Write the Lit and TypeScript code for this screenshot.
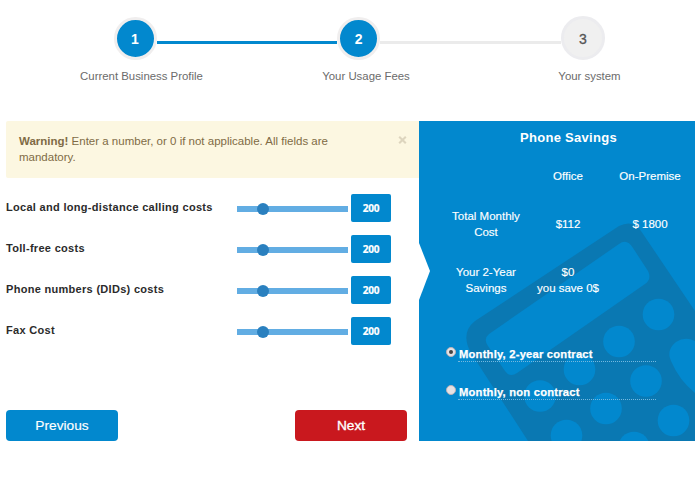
import { LitElement, html, css, svg } from "lit";
import { customElement } from "lit/decorators.js";
import { classMap } from "lit/directives/class-map.js";

const FEES = [
  { label: "Local and long-distance calling costs", value: 200 },
  { label: "Toll-free costs", value: 200 },
  { label: "Phone numbers (DIDs) costs", value: 200 },
  { label: "Fax Cost", value: 200 },
];

const KEYS = [
  [239.5, 193.5], [200, 220.5], [160.5, 248.5], [121, 275],
  [227, 260], [187, 287.5], [147.5, 314.5], [254.5, 299.5], [215, 326.5],
];

@customElement("wizard-steps")
class WizardSteps extends LitElement {
  static styles = css`
    :host { display: block; height: 120px; }
    .track { display: flex; align-items: center; padding: 16px 95px 0 113.5px; height: 44px; }
    .dot {
      box-sizing: border-box; flex: none; width: 43px; height: 43px; border-radius: 50%;
      border: 3px solid #f0eeee; background: #0288ce; color: #fff;
      font: bold 14px/37px "Liberation Sans", Arial, sans-serif; text-align: center; padding-top: 1px;
    }
    .dot.todo { width: 44px; height: 44px; background: #f0f0f0; border-color: #ececef; color: #555; font-weight: normal; -webkit-text-stroke: 0.3px #555; line-height: 38px; }
    .line { flex: 1; height: 3px; margin-top: 8px; background: #ebebeb; }
    .line.done { background: #0288ce; }
    .names { display: grid; grid-template-columns: 283px 166px 1fr; height: 20px; margin-top: 6px; }
    .name { text-align: center; font-size: 11.4px; line-height: 20px; color: #6b6b6b; white-space: nowrap; }
    .n3 { padding-right: 30px; padding-left: 60px; }
  `;
  render() {
    return html`
      <div class="track">
        <div class="dot">1</div><div class="line done"></div>
        <div class="dot">2</div><div class="line"></div>
        <div class="dot todo">3</div>
      </div>
      <div class="names">
        <div class="name">Current Business Profile</div>
        <div class="name">Your Usage Fees</div>
        <div class="name n3">Your system</div>
      </div>`;
  }
}

@customElement("fee-row")
class FeeRow extends LitElement {
  static properties = { label: {}, value: { type: Number } };
  declare label: string;
  declare value: number;
  static styles = css`
    :host { display: grid; grid-template-columns: 230.5px 111.5px 40px; align-items: center; height: 28px; }
    .label { font-size: 11px; font-weight: bold; letter-spacing: 0.3px; color: #2b2b2b; white-space: nowrap; line-height: 16px; padding-bottom: 2px; }
    .slider { display: flex; align-items: center; height: 6px; margin-top: 2px; background: #62ade3; }
    .knob { width: 12px; height: 12px; border-radius: 50%; background: #2a80bf; margin-left: 20px; }
    .value { margin-left: 3px; width: 40px; height: 28px; border-radius: 2px; background: #0288ce; color: #fff; text-align: center; font: bold 10px/28px "Open Sans", sans-serif; letter-spacing: -0.2px; -webkit-text-stroke: 0.2px #fff; }
  `;
  render() {
    return html`
      <div class="label">${this.label}</div>
      <div class="slider"><div class="knob"></div></div>
      <div class="value">${this.value}</div>`;
  }
}

@customElement("savings-panel")
class SavingsPanel extends LitElement {
  static styles = css`
    :host { display: block; position: relative; width: 276px; height: 320px; background: #0288ce; color: #fff; overflow: hidden; }
    .art { position: absolute; inset: 0; width: 276px; height: 320px; }
    .body { position: relative; }
    .title { padding: 7px 0 0 23px; text-align: center; font-size: 13px; font-weight: bold; line-height: 20px; letter-spacing: 0.28px; }
    .grid { display: grid; grid-template-columns: 98px 64px 82px; column-gap: 3px 9px; column-gap: 3px; padding-left: 16px; margin-top: 20px; font-size: 11.5px; line-height: 16px; text-align: center; align-items: center; grid-template-rows: 16px 32px 32px; row-gap: 24px; white-space: nowrap; -webkit-text-stroke: 0.15px #fff; }
    .grid :nth-child(3n + 1) { padding-left: 4px; }
    .grid :nth-child(3n) { padding-left: 12px; }
    .options { margin: 50px 0 0 27px; display: grid; row-gap: 22px; }
    .option { display: flex; align-items: flex-start; height: 16px; }
    .radio { box-sizing: border-box; width: 10px; height: 10px; margin-top: 1px; border-radius: 50%; border: 1px solid #bbb2b7; background: #e5e2e4; display: grid; place-items: center; }
    .radio.on::after { content: ""; width: 4px; height: 4px; border-radius: 50%; background: #444; }
    .text { margin-left: 2px; padding-left: 1px; width: 197px; height: 15px; font-size: 11.2px; letter-spacing: 0.22px; font-weight: bold; line-height: 16px; border-bottom: 1px dotted #74b8df; -webkit-text-stroke: 0.25px #fff; }
  `;
  option(text: string, on: boolean) {
    return html`<div class="option"><span class=${classMap({ radio: true, on })}></span><span class="text">${text}</span></div>`;
  }
  render() {
    return html`
      <svg class="art" viewBox="0 0 276 320">
        <path fill="#0a78b2" d="M200 105Q214 98 222 110L276 190V320H109L52 232Q41 212 56 200Z" />
        <path fill="#0288ce" d="M70 213Q64 218 69 225L86 250Q91 257 98 252L226 163Q233 158 229 150L214 127Q208 117 200 123Z" />
        <path fill="#0288ce" d="M276 220Q266 215 257 221Q247 229 252 240Q260 259 276 272Z" />
        ${KEYS.map(([x, y]) => svg`<circle cx=${x} cy=${y} r="15.8" fill="#0288ce" />`)}
        <path fill="#fff" d="M0 122L11 150L0 179Z" />
      </svg>
      <div class="body">
        <div class="title">Phone Savings</div>
        <div class="grid">
          <div></div><div>Office</div><div>On-Premise</div>
          <div>Total Monthly<br />Cost</div><div>$112</div><div>$ 1800</div>
          <div>Your 2-Year<br />Savings</div><div>$0<br />you save 0$</div><div></div>
        </div>
        <div class="options">
          ${this.option("Monthly, 2-year contract", true)}
          ${this.option("Monthly, non contract", false)}
        </div>
      </div>`;
  }
}

@customElement("app-root")
class AppRoot extends LitElement {
  static styles = css`
    :host { display: block; width: 700px; height: 480px; overflow: hidden; background: #fff; font-family: "Liberation Sans", Arial, sans-serif; }
    .main { display: flex; padding-left: 6px; margin-top: 1px; }
    .left { width: 413px; height: 320px; display: flex; flex-direction: column; }
    .warning { box-sizing: border-box; height: 57px; padding: 12px 9px 0 13px; display: flex; justify-content: space-between; background: #fcf7e1; border-radius: 2px 0 0 2px; color: #806b45; font-size: 11.5px; line-height: 16px; }
    .message { width: 330px; }
    .close { width: 9px; height: 8px; margin: 3px 3px 0 0; }
    .fees { display: grid; row-gap: 13px; margin-top: 16px; }
    .buttons { display: flex; justify-content: space-between; width: 401px; margin-top: auto; }
    .button { width: 112px; height: 31px; border: 0; padding: 0; border-radius: 4px; background: #0288ce; color: #fff; font: 13.7px/31px "Liberation Sans", Arial, sans-serif; text-align: center; -webkit-text-stroke: 0.15px #fff; }
    .next { background: #c9181e; -webkit-text-stroke: 0.35px #fff; }
  `;
  render() {
    return html`
      <wizard-steps></wizard-steps>
      <div class="main">
        <div class="left">
          <div class="warning">
            <div class="message"><b>Warning!</b> Enter a number, or 0 if not applicable. All fields are mandatory.</div>
            <svg class="close" viewBox="0 0 9 8"><path d="M1.2 .8L7.8 7.2M7.8 .8L1.2 7.2" stroke="#ddd5be" stroke-width="2.1" /></svg>
          </div>
          <div class="fees">
            ${FEES.map((f) => html`<fee-row .label=${f.label} .value=${f.value}></fee-row>`)}
          </div>
          <div class="buttons">
            <button class="button">Previous</button>
            <button class="button next">Next</button>
          </div>
        </div>
        <savings-panel></savings-panel>
      </div>`;
  }
}
